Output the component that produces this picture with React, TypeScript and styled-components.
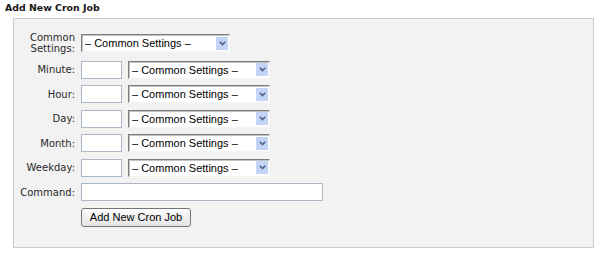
import { Fragment } from "react";
import styled, { createGlobalStyle } from "styled-components";

const GlobalStyle = createGlobalStyle`
  body {
    margin: 0;
    background: #ffffff;
    font-family: "DejaVu Sans", Verdana, sans-serif;
  }
`;

const Title = styled.h3`
  margin: 0 0 4px;
  padding: 1px 0 0 5px;
  height: 13px;
  font-size: 9.4px;
  line-height: 13px;
  font-weight: bold;
  color: #151515;
`;

const Panel = styled.div`
  margin: 0 6px 0 13px;
  padding: 13px 0 20px;
  border: 1px solid #c3d0cc;
  background: #f2f2f2;
`;

const Form = styled.div`
  display: grid;
  grid-template-columns: 61px auto;
  column-gap: 6px;
  row-gap: 6.5px;
  align-items: center;
  justify-content: start;
`;

const Label = styled.label`
  text-align: right;
  font-size: 10px;
  line-height: 11px;
  color: #2a2a2a;
`;

const Fields = styled.div`
  display: flex;
  gap: 6px;
  align-items: center;
`;

const TextBox = styled.input<{ $width: number }>`
  box-sizing: border-box;
  width: ${(p) => p.$width}px;
  height: 18px;
  margin: 0;
  padding: 0 3px;
  border: 1px solid #a9b7c6;
  background: #ffffff;
  font-family: "Liberation Sans", Arial, sans-serif;
  font-size: 11px;
  outline: none;
`;

const SelectBox = styled.div<{ $width: number }>`
  box-sizing: border-box;
  display: flex;
  align-items: center;
  width: ${(p) => p.$width}px;
  height: 18px;
  padding-right: 1px;
  border: 1px solid;
  border-color: #7c7c7c #f4f4f4 #f4f4f4 #7c7c7c;
  box-shadow: inset 1px 1px 0 #c4c4c4;
  background: #ffffff;
`;

const NativeSelect = styled.select`
  flex: 1;
  min-width: 0;
  height: 100%;
  margin: 0;
  padding: 0 0 0 3px;
  border: none;
  background: transparent;
  appearance: none;
  font-family: "Liberation Sans", Arial, sans-serif;
  font-size: 11px;
  color: #000000;
  outline: none;
`;

const ArrowBox = styled.span`
  display: flex;
  align-items: center;
  justify-content: center;
  width: 12px;
  height: 13px;
  background: #c3d4f6;
`;

const Button = styled.button`
  box-sizing: border-box;
  width: 110px;
  height: 19px;
  padding: 0;
  border: 1px solid #6f7780;
  border-radius: 3px;
  background: linear-gradient(#fdfdfd, #e4e4e4);
  font-family: "Liberation Sans", Arial, sans-serif;
  font-size: 11px;
  color: #000000;
`;

function Chevron() {
  return (
    <svg width="7" height="5" viewBox="0 0 7 5">
      <path d="M0.8 0.8 L3.5 3.6 L6.2 0.8" fill="none" stroke="#4a5f8a" strokeWidth="1.6" />
    </svg>
  );
}

function CommonSelect({ width }: { width: number }) {
  return (
    <SelectBox $width={width}>
      <NativeSelect defaultValue="">
        <option value="">– Common Settings –</option>
      </NativeSelect>
      <ArrowBox>
        <Chevron />
      </ArrowBox>
    </SelectBox>
  );
}

const timeFields = ["Minute", "Hour", "Day", "Month", "Weekday"];

export default function App() {
  return (
    <>
      <GlobalStyle />
      <Title>Add New Cron Job</Title>
      <Panel>
        <Form>
          <Label>Common Settings:</Label>
          <Fields>
            <CommonSelect width={149} />
          </Fields>
          {timeFields.map((name) => (
            <Fragment key={name}>
              <Label>{name}:</Label>
              <Fields>
                <TextBox $width={41} />
                <CommonSelect width={142} />
              </Fields>
            </Fragment>
          ))}
          <Label>Command:</Label>
          <Fields>
            <TextBox $width={242} />
          </Fields>
          <span />
          <Fields>
            <Button>Add New Cron Job</Button>
          </Fields>
        </Form>
      </Panel>
    </>
  );
}
